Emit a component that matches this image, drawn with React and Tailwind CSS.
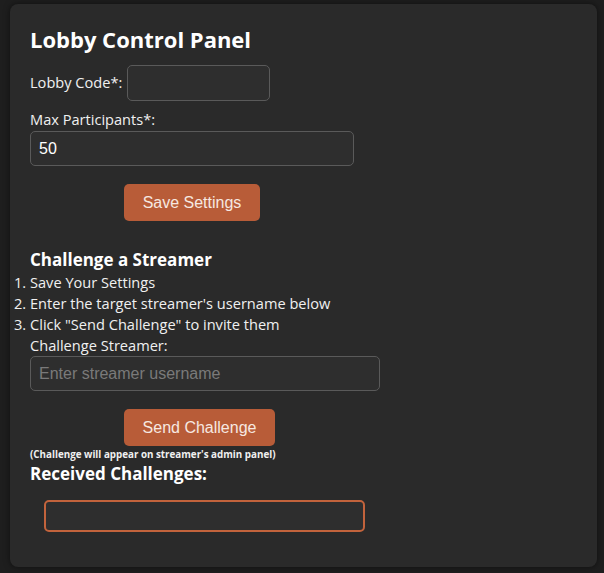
import React from 'react';

export default function App() {
    return (
        <div className="min-h-[573px] bg-[#1e1e1e] pt-[4px] pl-[10px] pr-[7px] pb-[7px]">
            <div className="rounded-lg bg-[#2a2a2a] shadow-[0_0_6px_rgba(0,0,0,0.5)] pl-[20px] pr-[20px] pt-[20px] pb-[35px] text-[#f0f0f0] font-['Open_Sans',sans-serif]">
                <h2 className="text-[22px] leading-[30px] font-bold text-white">Lobby Control Panel</h2>

                <div className="mt-[11px] flex items-center text-[14.6px]">
                    <label>Lobby Code*:</label>
                    <input
                        type="text"
                        className="ml-[5px] w-[143px] h-[36px] rounded-[5px] border border-[#5a5a5a] bg-[#2e2e2e] px-[8px] text-[16px] text-white font-['Liberation_Sans',Arial,sans-serif] outline-none"
                    />
                </div>

                <div className="mt-[7px] text-[14.6px] leading-[23px]">
                    <label>Max Participants*:</label>
                </div>
                <input
                    type="number"
                    defaultValue="50"
                    className="block w-[324px] h-[35px] rounded-[5px] border border-[#5a5a5a] bg-[#2e2e2e] px-[8px] text-[16px] text-white font-['Liberation_Sans',Arial,sans-serif] outline-none [appearance:textfield]"
                />

                <button className="mt-[18px] ml-[94px] block h-[37px] w-[136px] rounded-[5px] bg-[#b85c38] text-[16px] text-[#f6e8e1] font-['Liberation_Sans',Arial,sans-serif]">
                    Save Settings
                </button>

                <h3 className="mt-[26px] text-[17px] leading-[25px] font-bold text-white">Challenge a Streamer</h3>
                <ol className="list-decimal text-[14.6px] leading-[21px] pl-0 ml-0">
                    <li>Save Your Settings</li>
                    <li>Enter the target streamer's username below</li>
                    <li>Click "Send Challenge" to invite them</li>
                </ol>
                <div className="text-[14.6px] leading-[21px]">
                    <label>Challenge Streamer:</label>
                </div>
                <input
                    type="text"
                    placeholder="Enter streamer username"
                    className="block w-[350px] h-[35px] rounded-[5px] border border-[#5a5a5a] bg-[#2e2e2e] px-[8px] text-[16px] text-white placeholder:text-[#7a7a7a] font-['Liberation_Sans',Arial,sans-serif] outline-none"
                />

                <button className="mt-[18px] ml-[94px] block h-[37px] w-[151px] rounded-[5px] bg-[#b85c38] text-[16px] text-[#f6e8e1] font-['Liberation_Sans',Arial,sans-serif]">
                    Send Challenge
                </button>

                <p className="text-[9.8px] leading-[17px] font-bold">(Challenge will appear on streamer's admin panel)</p>
                <h3 className="text-[17px] leading-[22px] font-bold text-white">Received Challenges:</h3>

                <div className="mt-[15px] ml-[14px] h-[32px] w-[321px] rounded-[5px] border-2 border-[#c2633c] bg-[#2e2e2e]" />
            </div>
        </div>
    );
}
